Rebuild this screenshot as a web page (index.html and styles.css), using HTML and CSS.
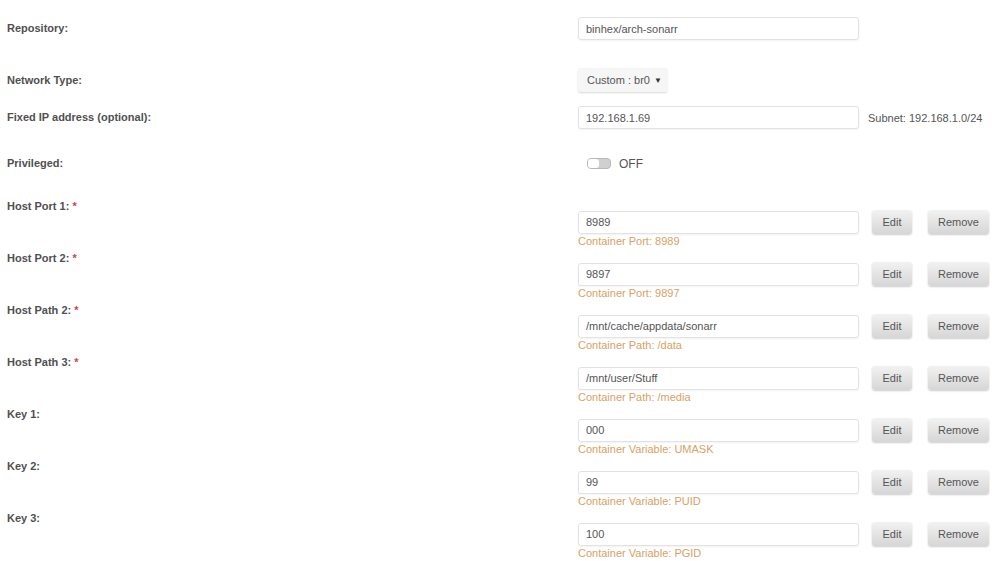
FILE: index.html
```html
<!DOCTYPE html>
<html lang="en">
<head>
    <meta charset="UTF-8">
    <title>Add Container</title>
    <link rel="stylesheet" href="styles.css">
</head>
<body>
    <div class="form">
        <div class="row row-repo">
            <div class="label">Repository:</div>
            <div class="field">
                <input type="text" class="text-input" value="binhex/arch-sonarr">
            </div>
        </div>
        <div class="row row-net">
            <div class="label">Network Type:</div>
            <div class="field">
                <div class="select"><span>Custom : br0</span><span class="caret">&#9660;</span></div>
            </div>
        </div>
        <div class="row row-ip">
            <div class="label">Fixed IP address (optional):</div>
            <div class="field">
                <input type="text" class="text-input" value="192.168.1.69">
                <span class="hint">Subnet: 192.168.1.0/24</span>
            </div>
        </div>
        <div class="row row-priv">
            <div class="label">Privileged:</div>
            <div class="field">
                <span class="toggle"><span class="knob"></span></span>
                <span class="toggle-text">OFF</span>
            </div>
        </div>

        <div class="config">
            <div class="label">Host Port 1: <span class="req">*</span></div>
            <div class="field-stack">
                <div class="field">
                    <input type="text" class="text-input" value="8989">
                    <button class="btn btn-edit">Edit</button>
                    <button class="btn btn-remove">Remove</button>
                </div>
                <div class="desc">Container Port: 8989</div>
            </div>
        </div>
        <div class="config">
            <div class="label">Host Port 2: <span class="req">*</span></div>
            <div class="field-stack">
                <div class="field">
                    <input type="text" class="text-input" value="9897">
                    <button class="btn btn-edit">Edit</button>
                    <button class="btn btn-remove">Remove</button>
                </div>
                <div class="desc">Container Port: 9897</div>
            </div>
        </div>
        <div class="config">
            <div class="label">Host Path 2: <span class="req">*</span></div>
            <div class="field-stack">
                <div class="field">
                    <input type="text" class="text-input" value="/mnt/cache/appdata/sonarr">
                    <button class="btn btn-edit">Edit</button>
                    <button class="btn btn-remove">Remove</button>
                </div>
                <div class="desc">Container Path: /data</div>
            </div>
        </div>
        <div class="config">
            <div class="label">Host Path 3: <span class="req">*</span></div>
            <div class="field-stack">
                <div class="field">
                    <input type="text" class="text-input" value="/mnt/user/Stuff">
                    <button class="btn btn-edit">Edit</button>
                    <button class="btn btn-remove">Remove</button>
                </div>
                <div class="desc">Container Path: /media</div>
            </div>
        </div>
        <div class="config">
            <div class="label">Key 1:</div>
            <div class="field-stack">
                <div class="field">
                    <input type="text" class="text-input" value="000">
                    <button class="btn btn-edit">Edit</button>
                    <button class="btn btn-remove">Remove</button>
                </div>
                <div class="desc">Container Variable: UMASK</div>
            </div>
        </div>
        <div class="config">
            <div class="label">Key 2:</div>
            <div class="field-stack">
                <div class="field">
                    <input type="text" class="text-input" value="99">
                    <button class="btn btn-edit">Edit</button>
                    <button class="btn btn-remove">Remove</button>
                </div>
                <div class="desc">Container Variable: PUID</div>
            </div>
        </div>
        <div class="config">
            <div class="label">Key 3:</div>
            <div class="field-stack">
                <div class="field">
                    <input type="text" class="text-input" value="100">
                    <button class="btn btn-edit">Edit</button>
                    <button class="btn btn-remove">Remove</button>
                </div>
                <div class="desc">Container Variable: PGID</div>
            </div>
        </div>
    </div>
</body>
</html>
```

FILE: styles.css
```css
body {
    margin: 0;
    padding: 0;
    background-color: #fff;
    font-family: "Liberation Sans", Arial, sans-serif;
    font-size: 11px;
    color: #555;
    overflow: hidden;
}
.form {
    padding: 17px 0 0 7px;
}
.row {
    display: grid;
    grid-template-columns: 571px 1fr;
    align-items: center;
}
.label {
    font-weight: bold;
    color: #505050;
    line-height: 14px;
}
.row .label {
    margin-top: -1px;
}
.req {
    color: #c44;
}
.field {
    display: flex;
    align-items: center;
}
.row-repo {
    height: 23px;
    margin-bottom: 28px;
}
.row-net {
    height: 24px;
    margin-bottom: 14px;
}
.row-ip {
    height: 23px;
    margin-bottom: 23px;
}
.row-priv {
    height: 23px;
    margin-bottom: 24px;
}
.text-input {
    box-sizing: border-box;
    width: 281px;
    height: 23px;
    padding: 0 7px;
    border: 1px solid #e2e2e2;
    border-radius: 3px;
    box-shadow: 0 1px 2px rgba(0, 0, 0, 0.05);
    background-color: #fff;
    font-family: inherit;
    font-size: 11px;
    color: #555;
    outline: none;
}
.hint {
    margin-left: 9px;
    color: #555;
}
.select {
    display: flex;
    align-items: center;
    box-sizing: border-box;
    width: 89px;
    height: 24px;
    padding: 0 5px 0 9px;
    background-color: #f6f6f6;
    border-radius: 2px;
    box-shadow: 0 1px 2px rgba(0, 0, 0, 0.15);
    color: #555;
}
.caret {
    margin-left: auto;
    font-size: 8px;
    color: #333;
}
.toggle {
    position: relative;
    box-sizing: border-box;
    width: 24px;
    height: 11px;
    margin-left: 9px;
    border: 1px solid #b8b8b8;
    border-radius: 4px;
    background-color: #d0d0d0;
}
.knob {
    position: absolute;
    left: 0;
    top: 0;
    width: 11px;
    height: 9px;
    border-radius: 3px;
    background-color: #fff;
}
.toggle-text {
    margin-left: 8px;
    font-size: 12px;
    color: #555;
}
.config {
    display: grid;
    grid-template-columns: 571px 1fr;
    height: 52px;
}
.field-stack {
    padding-top: 11px;
}
.desc {
    line-height: 14px;
    color: #d9a166;
}
.btn {
    box-sizing: border-box;
    height: 24px;
    border: none;
    border-radius: 3px;
    background: linear-gradient(#f2f2f2, #d6d6d6);
    box-shadow: 0 1px 2px rgba(0, 0, 0, 0.2);
    font-family: inherit;
    font-size: 11px;
    color: #555;
    cursor: pointer;
}
.btn-edit {
    width: 40px;
    margin-left: 13px;
}
.btn-remove {
    width: 61px;
    margin-left: 16px;
}
```
